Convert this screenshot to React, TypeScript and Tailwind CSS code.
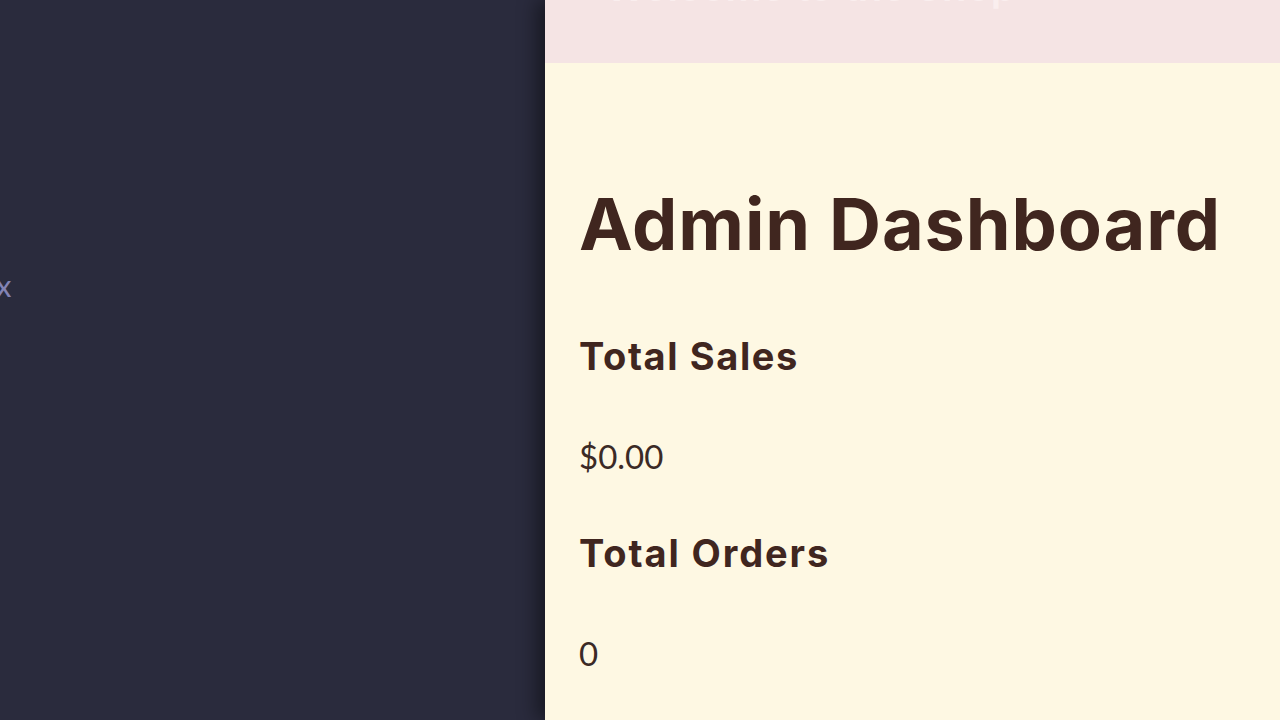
export default function App() {
  return (
    <div className="flex h-screen w-full overflow-hidden bg-[#2a2b3d]">
      {/* sidebar, mostly off screen */}
      <aside className="w-[545px] shrink-0 bg-[#2a2b3d] pt-[270px]">
        <div className="-ml-[4px] font-['Lato',sans-serif] text-[31px] leading-none text-[#8383b5]">x</div>
      </aside>

      <main className="relative z-10 flex-1 bg-[#fef8e3] shadow-[-8px_0_18px_rgba(0,0,0,0.45)]">
        <header className="h-[63px] overflow-hidden bg-[#f5e4e4] px-[60px]">
          <div className="-mt-[33px] font-['Inter',sans-serif] text-[40px] font-semibold leading-[40px] text-[#faeeee]">
            Welcome to the Shop
          </div>
        </header>

        <section className="px-[34px] font-['Inter',sans-serif] text-[#40261f]">
          <h1 className="mt-[125px] text-[72px] font-bold leading-none tracking-[0.9px]">Admin Dashboard</h1>

          <h2 className="mt-[77px] text-[38px] font-bold leading-none tracking-[1.6px]">Total Sales</h2>
          <p className="mt-[65px] font-['Lato',sans-serif] text-[33px] leading-none text-[#3b2a26]">$0.00</p>

          <h2 className="mt-[61px] text-[38px] font-bold leading-none tracking-[1.9px]">Total Orders</h2>
          <p className="mt-[65px] font-['Lato',sans-serif] text-[33px] leading-none text-[#3b2a26]">0</p>
        </section>
      </main>
    </div>
  );
}
